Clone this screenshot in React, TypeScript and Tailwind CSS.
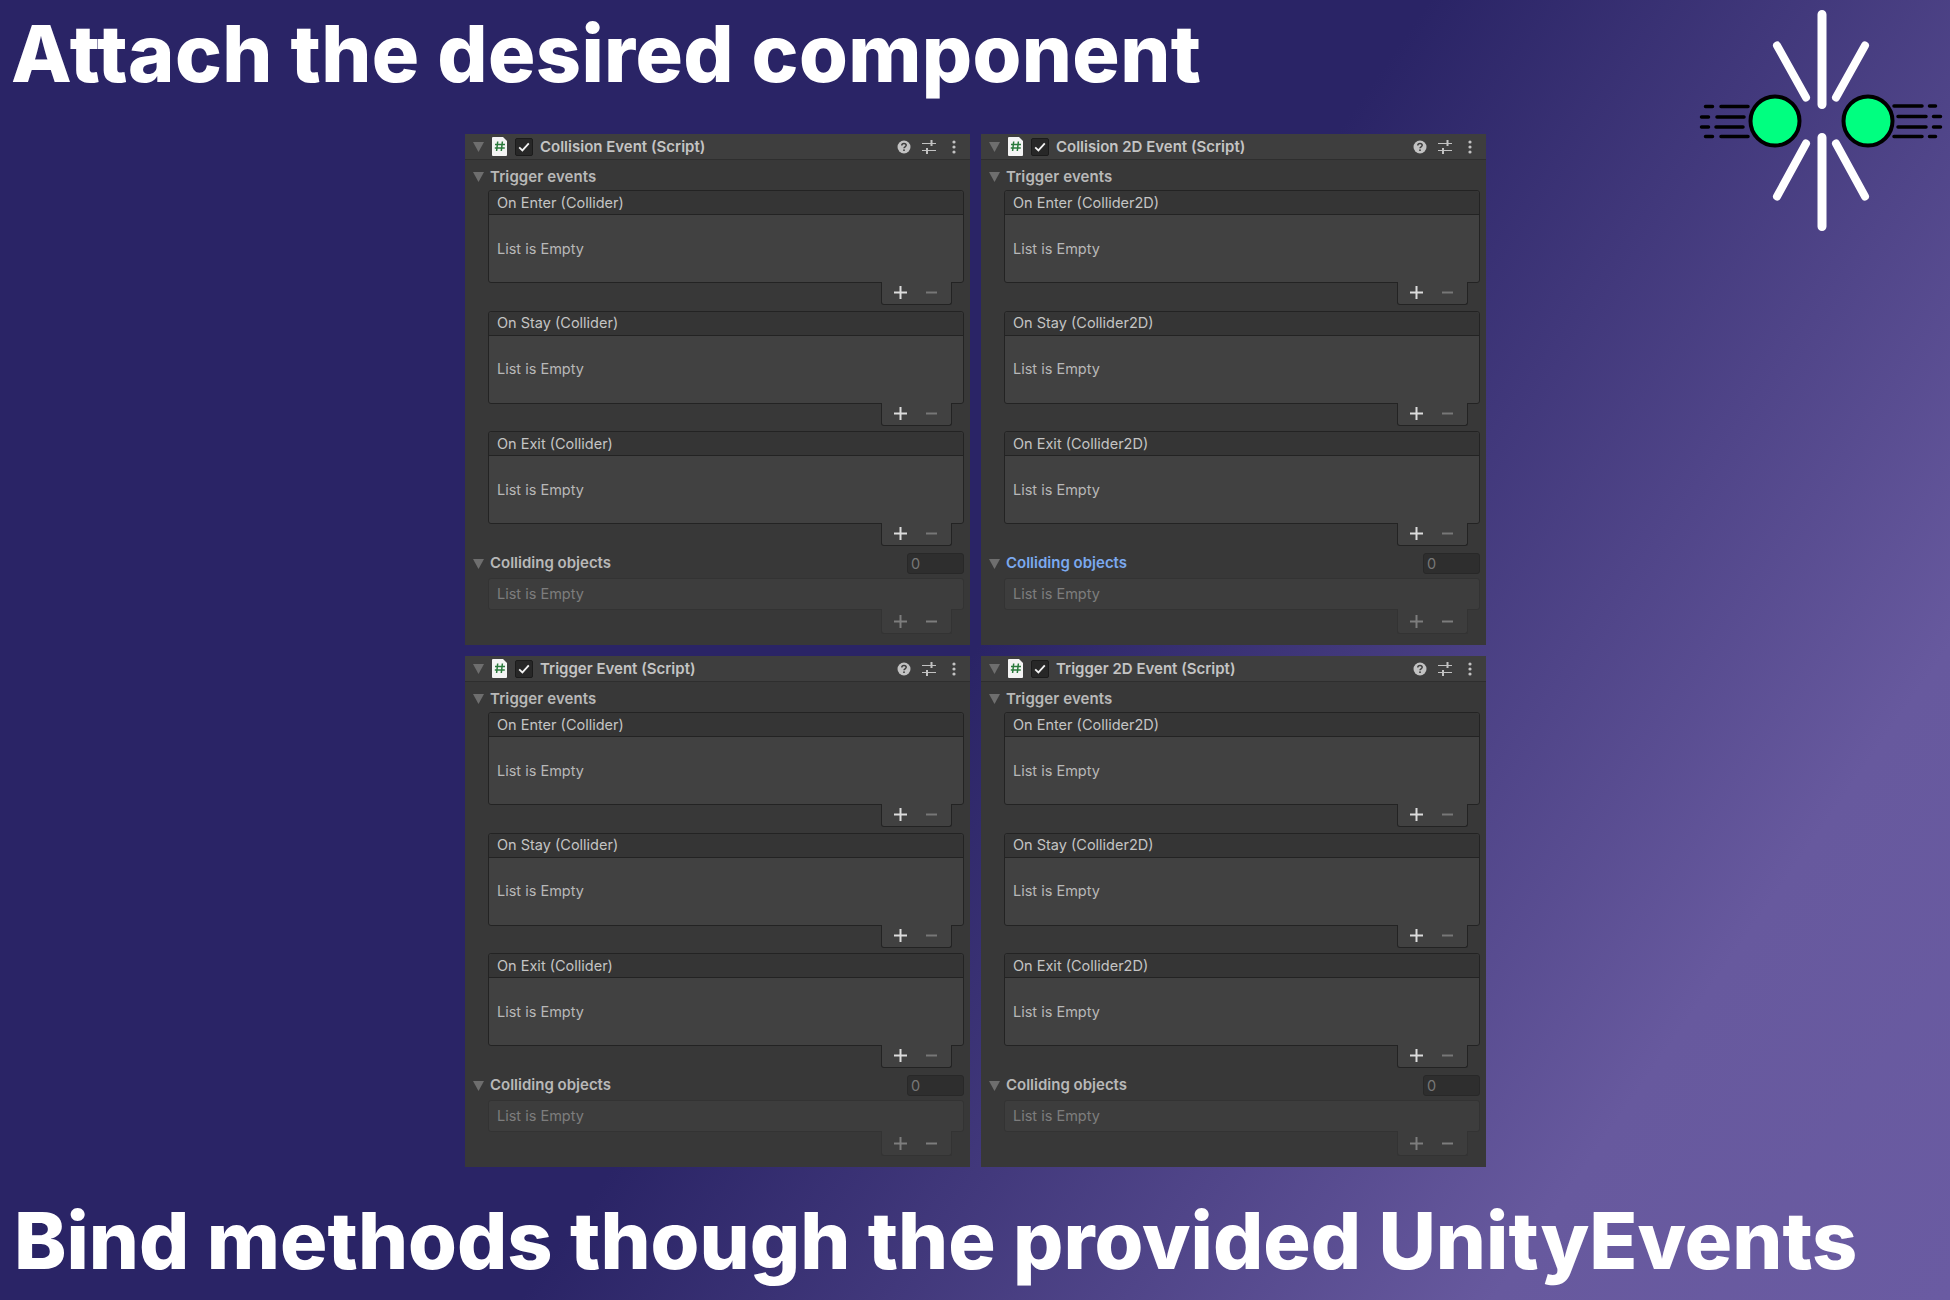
const font = "font-['Inter','Liberation_Sans',sans-serif]";

function Triangle() {
  return (
    <svg width="11" height="10" viewBox="0 0 11 10" className="shrink-0">
      <path d="M0 0h11L5.5 10z" fill="#6e6e6e" />
    </svg>
  );
}

function ScriptIcon() {
  return (
    <svg width="16" height="19" viewBox="0 0 16 19" className="-mr-px shrink-0">
      <path d="M1 0h10l4 4v14a1 1 0 0 1-1 1H1a1 1 0 0 1-1-1V1a1 1 0 0 1 1-1z" fill="#f4f4f4" />
      <path d="M5.7 4.5 4.6 14M10.4 4.5 9.3 14M3 7.5h10M2.8 11h10" stroke="#2a7a3c" strokeWidth="1.5" fill="none" />
    </svg>
  );
}

function CheckBox() {
  return (
    <div className="-mr-px flex h-[18px] w-[18px] shrink-0 items-center justify-center rounded-[2px] border border-[#1b1b1b] bg-[#272727]">
      <svg width="12" height="10" viewBox="0 0 12 10">
        <path d="M1.2 5.4 4.4 8.4 10.8 1.4" stroke="#f2f2f2" strokeWidth="1.8" fill="none" />
      </svg>
    </div>
  );
}

function HeaderIcons() {
  return (
    <div className="ml-auto flex items-center gap-[9px] pr-[14px]">
      <svg width="14" height="14" viewBox="0 0 14 14" className="mr-[2px]">
        <circle cx="7" cy="7" r="6.5" fill="#c2c2c2" />
        <path d="M4.8 5.4c0-1.3 1-2 2.2-2s2.2.7 2.2 1.9c0 1.5-2.2 1.5-2.2 3" stroke="#3e3e3e" strokeWidth="1.5" fill="none" />
        <rect x="6.2" y="9.4" width="1.6" height="1.6" fill="#3e3e3e" />
      </svg>
      <svg width="14" height="14" viewBox="0 0 14 14">
        <path d="M0 3.5h14M0 10.5h14" stroke="#c2c2c2" strokeWidth="1.2" />
        <path d="M9.5 0v6M5 8v6" stroke="#c2c2c2" strokeWidth="2" />
      </svg>
      <svg width="4" height="14" viewBox="0 0 4 14" className="ml-[7px]">
        <circle cx="2" cy="2" r="1.6" fill="#c2c2c2" />
        <circle cx="2" cy="7" r="1.6" fill="#c2c2c2" />
        <circle cx="2" cy="12" r="1.6" fill="#c2c2c2" />
      </svg>
    </div>
  );
}

function PlusMinus({ plus, minus }: { plus: string; minus: string }) {
  return (
    <>
      <svg width="13" height="13" viewBox="0 0 13 13">
        <path d="M6.5 0v13M0 6.5h13" stroke={plus} strokeWidth="2" />
      </svg>
      <svg width="11" height="3" viewBox="0 0 11 3" className="ml-[19px]">
        <path d="M0 1.5h11" stroke={minus} strokeWidth="2" />
      </svg>
    </>
  );
}

function EventList({ label }: { label: string }) {
  return (
    <div className="mb-[5.5px]">
      <div className="rounded-[3px] border border-[#232323] bg-[#414141]">
        <div className="flex h-[24px] items-center rounded-t-[3px] border-b border-[#232323] bg-[#353535] pl-[8px] text-[14.5px] text-[#c4c4c4]">
          {label}
        </div>
        <div className="flex h-[67px] items-center pl-[8px] text-[14.5px] text-[#b8b8b8]">List is Empty</div>
      </div>
      <div className="mr-[12px] flex h-[22px] justify-end">
        <div className="-mt-px flex w-[71px] items-center rounded-b-[3px] border border-t-0 border-[#232323] bg-[#414141] pb-[1px] pl-[12px]">
          <PlusMinus plus="#dcdcdc" minus="#777777" />
        </div>
      </div>
    </div>
  );
}

function Panel({ title, suffix, highlight }: { title: string; suffix: string; highlight?: boolean }) {
  return (
    <div className="h-[511px] w-[505px] bg-[#383838]">
      <div className="flex h-[26px] items-center gap-[8px] border-b border-[#2e2e2e] bg-[#3e3e3e] pl-[8px]">
        <Triangle />
        <ScriptIcon />
        <CheckBox />
        <span className="pt-[2px] text-[15px] font-semibold text-[#c4c4c4]">{title}</span>
        <HeaderIcons />
      </div>
      <div className="flex h-[30px] items-center gap-[6px] pl-[8px] pt-[4px]">
        <Triangle />
        <span className="text-[15px] font-semibold tracking-[0.1px] text-[#b8b8b8]">Trigger events</span>
      </div>
      <div className="pl-[23px] pr-[6px]">
        <EventList label={`On Enter (${suffix})`} />
        <EventList label={`On Stay (${suffix})`} />
        <EventList label={`On Exit (${suffix})`} />
      </div>
      <div className="-mt-[2.5px] flex h-[29px] items-center gap-[6px] pl-[8px] pr-[6px]">
        <Triangle />
        <span className={`text-[15px] font-semibold ${highlight ? "text-[#7ba9ef]" : "text-[#b8b8b8]"}`}>
          Colliding objects
        </span>
        <div className="ml-auto flex h-[21px] w-[57px] items-center rounded-[3px] border border-[#282828] bg-[#2e2e2e] pl-[3px] text-[14.5px] text-[#777777]">
          0
        </div>
      </div>
      <div className="pl-[23px] pr-[6px]">
        <div className="flex h-[32px] items-center rounded-[3px] border border-[#333333] bg-[#3d3d3d] pl-[8px] text-[14.5px] text-[#7d7d7d]">
          List is Empty
        </div>
        <div className="mr-[12px] flex h-[24px] justify-end">
          <div className="-mt-px flex w-[71px] items-center rounded-b-[3px] border border-t-0 border-[#333333] bg-[#3d3d3d] pl-[12px]">
            <PlusMinus plus="#7d7d7d" minus="#7d7d7d" />
          </div>
        </div>
      </div>
    </div>
  );
}

function Logo() {
  return (
    <svg width="270" height="240" viewBox="0 0 270 240" className="absolute right-0 top-0">
      <g stroke="#ffffff" strokeWidth="9" strokeLinecap="round">
        <path d="M142 14.5v90M142 137.5v89" />
        <path d="M97 45.5l29 52M185 45.5l-29 52M126 143.5l-29 53M156 143.5l29 53" strokeWidth="8" />
      </g>
      <g fill="#00ff80" stroke="#000000" strokeWidth="4">
        <circle cx="95" cy="121" r="24.5" />
        <circle cx="188" cy="121" r="24.5" />
      </g>
      <g stroke="#000000" strokeWidth="3.5" strokeLinecap="round">
        <path d="M25.5 106.5h7M41 106.5h27M21.5 117h7M37 117h27M21.5 127h7M36 127h27M25.5 136.5h7M41 136.5h27" />
        <path d="M214 106h28M249.5 106h6M218 116.5h28M253.5 116.5h7M218 127h28M253.5 127h7M214 136.5h28M249.5 136.5h6" />
      </g>
    </svg>
  );
}

export default function App() {
  return (
    <div className={`relative flex h-[1300px] w-[1950px] flex-col overflow-hidden bg-[linear-gradient(125deg,#2a2466_50%,#67599e_84%,#6a5ba2_100%)] ${font}`}>
      <Logo />
      <h1 className="h-[134px] pl-[11px] pt-[3px] text-[79px] font-extrabold leading-[100px] tracking-[0.35px] text-white">
        Attach the desired component
      </h1>
      <div className="ml-[465px] grid w-[1021px] grid-cols-[505px_505px] gap-x-[11px] gap-y-[11px]">
        <Panel title="Collision Event (Script)" suffix="Collider" />
        <Panel title="Collision 2D Event (Script)" suffix="Collider2D" highlight />
        <Panel title="Trigger Event (Script)" suffix="Collider" />
        <Panel title="Trigger 2D Event (Script)" suffix="Collider2D" />
      </div>
      <h2 className="mt-[23px] pl-[14px] text-[79px] font-extrabold leading-[100px] text-white">
        Bind methods though the provided UnityEvents
      </h2>
    </div>
  );
}
